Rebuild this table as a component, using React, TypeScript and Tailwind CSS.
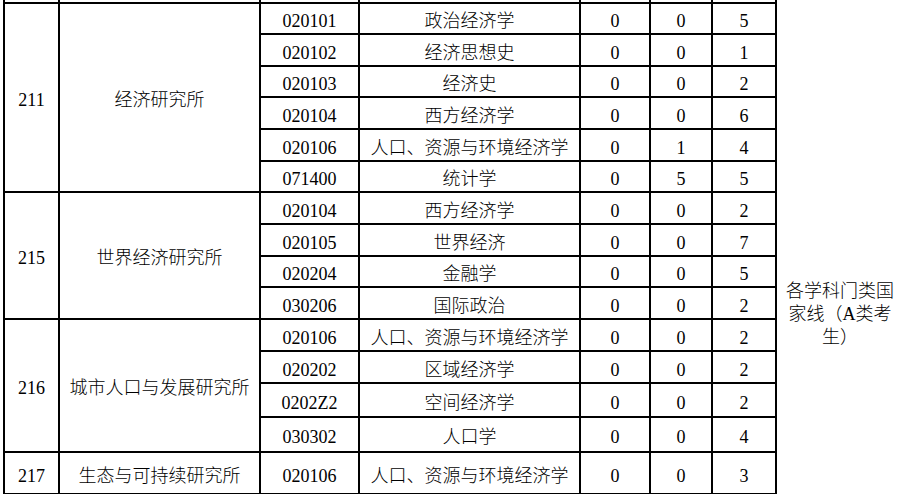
const groups = [
  {
    code: "211",
    name: "经济研究所",
    rows: [
      { id: "020101", major: "政治经济学", a: 0, b: 0, c: 5, h: 31 },
      { id: "020102", major: "经济思想史", a: 0, b: 0, c: 1, h: 32 },
      { id: "020103", major: "经济史", a: 0, b: 0, c: 2, h: 31 },
      { id: "020104", major: "西方经济学", a: 0, b: 0, c: 6, h: 32 },
      { id: "020106", major: "人口、资源与环境经济学", a: 0, b: 1, c: 4, h: 32 },
      { id: "071400", major: "统计学", a: 0, b: 5, c: 5, h: 31 },
    ],
  },
  {
    code: "215",
    name: "世界经济研究所",
    rows: [
      { id: "020104", major: "西方经济学", a: 0, b: 0, c: 2, h: 32 },
      { id: "020105", major: "世界经济", a: 0, b: 0, c: 7, h: 32 },
      { id: "020204", major: "金融学", a: 0, b: 0, c: 5, h: 31 },
      { id: "030206", major: "国际政治", a: 0, b: 0, c: 2, h: 32 },
    ],
  },
  {
    code: "216",
    name: "城市人口与发展研究所",
    rows: [
      { id: "020106", major: "人口、资源与环境经济学", a: 0, b: 0, c: 2, h: 32 },
      { id: "020202", major: "区域经济学", a: 0, b: 0, c: 2, h: 32 },
      { id: "0202Z2", major: "空间经济学", a: 0, b: 0, c: 2, h: 34 },
      { id: "030302", major: "人口学", a: 0, b: 0, c: 4, h: 35 },
    ],
  },
  {
    code: "217",
    name: "生态与可持续研究所",
    rows: [
      { id: "020106", major: "人口、资源与环境经济学", a: 0, b: 0, c: 3, h: 42 },
    ],
  },
];

const totalRows = 1 + groups.reduce((n, g) => n + g.rows.length, 0);

const cell = "border-2 border-black p-0 pt-[5px] text-center align-middle whitespace-nowrap";

export default function App() {
  return (
    <div className="h-[494px] w-[904px] overflow-hidden bg-white text-[18px] font-light leading-none text-black font-['Liberation_Serif','Noto_Sans_CJK_SC',serif]">
      <table className="ml-[3px] -mt-[30px] table-fixed border-collapse">
        <colgroup>
          <col className="w-[55px]" />
          <col className="w-[201px]" />
          <col className="w-[99px]" />
          <col className="w-[221px]" />
          <col className="w-[70px]" />
          <col className="w-[62px]" />
          <col className="w-[64px]" />
          <col className="w-[127px]" />
        </colgroup>
        <tbody>
          {/* row above the crop */}
          <tr>
            <td className={`${cell} h-[32px]`} />
            <td className={cell} />
            <td className={cell} />
            <td className={cell} />
            <td className={cell} />
            <td className={cell} />
            <td className={cell} />
            <td rowSpan={totalRows} className="border-0 px-[8px] pt-[309px] align-top text-center leading-[23px]">
              各学科门类国家线（A类考生）
            </td>
          </tr>
          {groups.map((g) =>
            g.rows.map((r, i) => (
              <tr key={g.code + r.id}>
                {i === 0 && (
                  <>
                    <td rowSpan={g.rows.length} className={cell}>{g.code}</td>
                    <td rowSpan={g.rows.length} className={cell}>{g.name}</td>
                  </>
                )}
                <td className={cell} style={{ height: r.h }}>{r.id}</td>
                <td className={cell}>{r.major}</td>
                <td className={cell}>{r.a}</td>
                <td className={cell}>{r.b}</td>
                <td className={cell}>{r.c}</td>
              </tr>
            ))
          )}
        </tbody>
      </table>
    </div>
  );
}
